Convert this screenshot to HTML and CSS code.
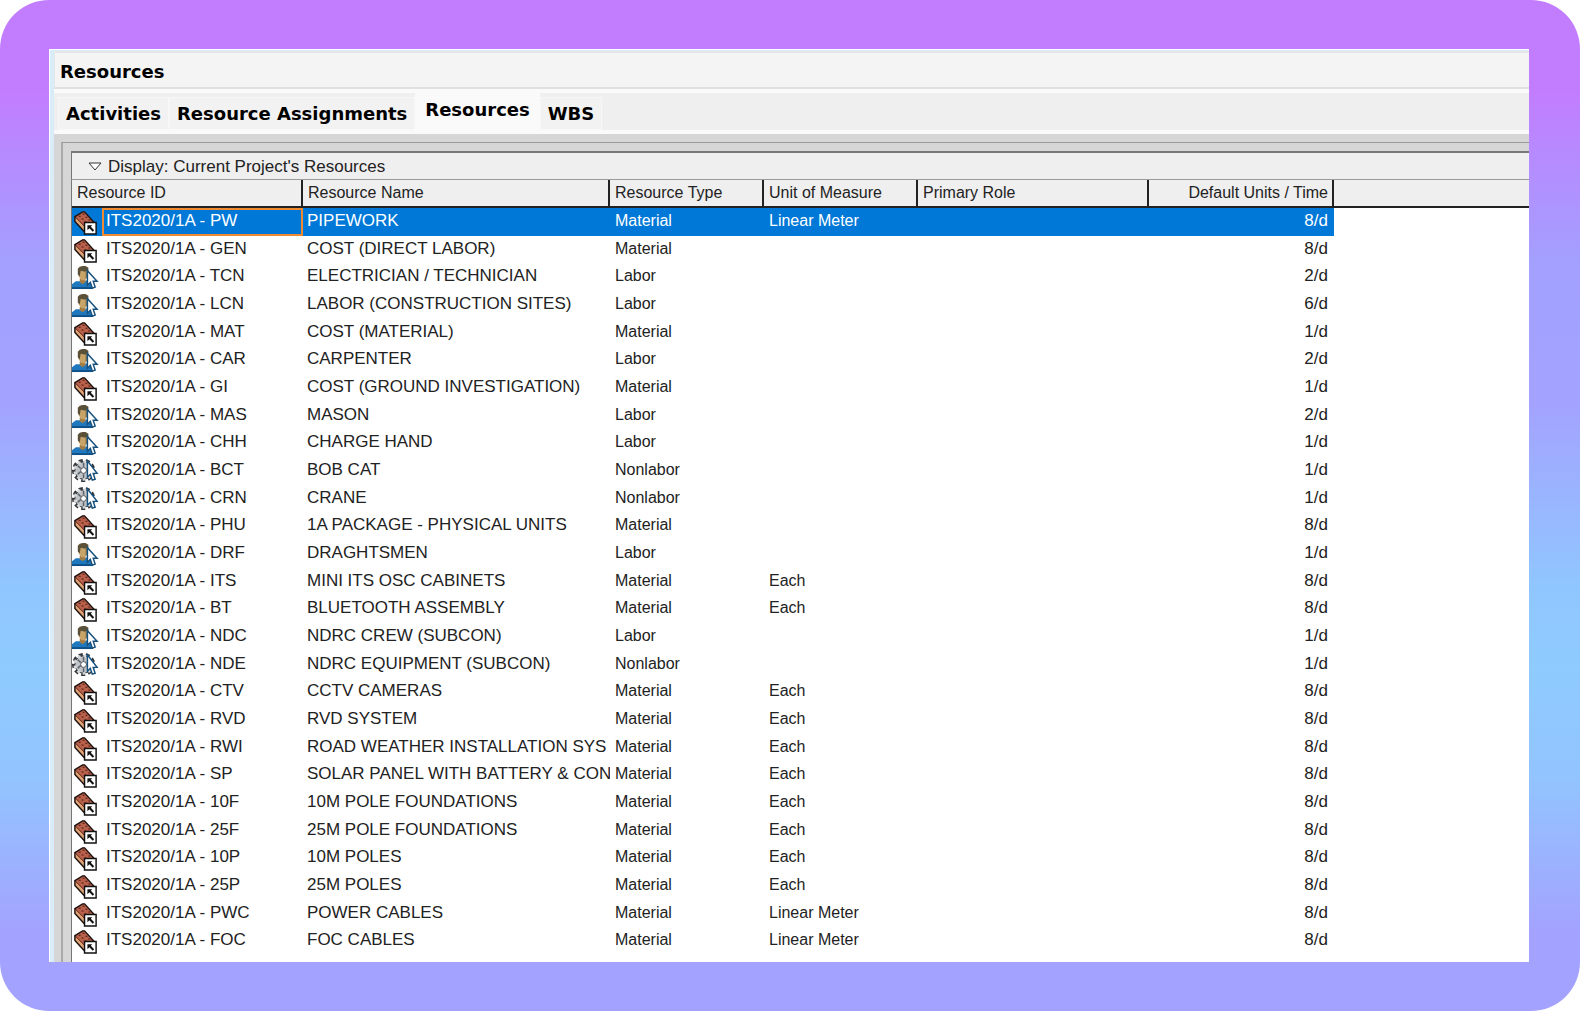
FILE: index.html
```html
<!DOCTYPE html>
<html lang="en">
<head>
    <meta charset="UTF-8">
    <meta name="viewport" content="width=device-width, initial-scale=1.0">
    <title>Resources</title>
    <link rel="stylesheet" href="styles.css">
</head>
<body>
    <svg class="sprites" aria-hidden="true">
        <symbol id="material" viewBox="0 0 28 28">
            <path d="M3 9V14L14 26H19L24 22V16L13 4H11Z" fill="#dfa274"/>
            <path d="M3 9L11 4H13L24 16L16 20H14Z" fill="#b9604a"/>
            <path d="M3 9L14 20V26" fill="none" stroke="#5a241a" stroke-width="1"/>
            <path d="M3 9L11 4H13L24 16V22L19 26H14L3 14Z" fill="none" stroke="#1c1210" stroke-width="1.5"/>
            <path d="M7 8h2v1H7z M11 6h2v1h-2z M10 11h2v1h-2z M14 9h2v1h-2z M13 14h2v1h-2z M17 12h2v1h-2z" fill="#461a16"/>
            <path class="badge" d="M13 15H25V27H13Z" stroke="#111" stroke-width="1.5"/>
            <path d="M16 18H21L19.5 19.5L23 23L21.5 24.5L18 21L16 23Z" fill="#111"/>
        </symbol>
        <symbol id="labor" viewBox="0 0 28 28">
            <path d="M0 27V22L4 19H8L11 21L15 18L20 21V27Z" fill="#1f78bd"/>
            <path d="M0 25H22V27H0Z" fill="#0f4f87"/>
            <path d="M8 16H14V20L11 22L8 20Z" fill="#a37d46"/>
            <path d="M7 7H16V14L13 18H10L7 14Z" fill="#c9a468"/>
            <path d="M6 12V6L8 4L11 3H14L17 5V9H14L9 8L8 14Z" fill="#5b5038"/>
            <path d="M14 8H16V16H14Z" fill="#8b7a50"/>
            <path d="M16 8V23L19 20L21 26L24 25L22 19H26Z" fill="#fff" stroke="#16507d" stroke-width="1.5"/>
        </symbol>
        <symbol id="nonlabor" viewBox="0 0 28 28">
            <circle cx="12" cy="14" r="10" fill="none" stroke="#33373b" stroke-width="4" stroke-dasharray="4 3"/>
            <circle cx="12" cy="14" r="9" fill="#bfc3c8" stroke="#33373b" stroke-width="1"/>
            <circle cx="12" cy="14" r="9" fill="none" stroke="#d5d8db" stroke-width="3" stroke-dasharray="3 3"/>
            <path d="M6 9l3 3 M6 18l3-3 M12 6v4 M12 18v4" stroke="#5a5f66" stroke-width="1.5"/>
            <circle cx="12" cy="14" r="3" fill="#fff" stroke="#44484e" stroke-width="1"/>
            <path d="M16 4V21L19 18L21 24L24 23L22 17H26Z" fill="#fff" stroke="#16507d" stroke-width="1.5"/>
        </symbol>
    </svg>

    <main class="window">
        <header class="titlebar">
            <h1>Resources</h1>
        </header>
        <nav class="tabs">
            <button class="tab">Activities</button>
            <button class="tab">Resource Assignments</button>
            <button class="tab active">Resources</button>
            <button class="tab">WBS</button>
        </nav>
        <section class="frame">
            <div class="panel">
                <button class="display">
                    <svg class="arrow" viewBox="0 0 14 9"><path d="M1 1H13L7 8Z" fill="#fff" stroke="#333"/></svg>
                    Display: Current Project's Resources
                </button>
                <table class="grid">
                    <thead>
                        <tr><th>Resource ID</th><th>Resource Name</th><th>Resource Type</th><th>Unit of Measure</th><th>Primary Role</th><th class="units">Default Units / Time</th></tr>
                    </thead>
                    <tbody>
                        <tr class="selected"><td class="id"><svg class="icon"><use href="#material"/></svg><span>ITS2020/1A - PW</span></td><td class="name">PIPEWORK</td><td>Material</td><td>Linear Meter</td><td></td><td class="units">8/d</td></tr>
                        <tr><td class="id"><svg class="icon"><use href="#material"/></svg><span>ITS2020/1A - GEN</span></td><td class="name">COST (DIRECT LABOR)</td><td>Material</td><td></td><td></td><td class="units">8/d</td></tr>
                        <tr><td class="id"><svg class="icon"><use href="#labor"/></svg><span>ITS2020/1A - TCN</span></td><td class="name">ELECTRICIAN / TECHNICIAN</td><td>Labor</td><td></td><td></td><td class="units">2/d</td></tr>
                        <tr><td class="id"><svg class="icon"><use href="#labor"/></svg><span>ITS2020/1A - LCN</span></td><td class="name">LABOR (CONSTRUCTION SITES)</td><td>Labor</td><td></td><td></td><td class="units">6/d</td></tr>
                        <tr><td class="id"><svg class="icon"><use href="#material"/></svg><span>ITS2020/1A - MAT</span></td><td class="name">COST (MATERIAL)</td><td>Material</td><td></td><td></td><td class="units">1/d</td></tr>
                        <tr><td class="id"><svg class="icon"><use href="#labor"/></svg><span>ITS2020/1A - CAR</span></td><td class="name">CARPENTER</td><td>Labor</td><td></td><td></td><td class="units">2/d</td></tr>
                        <tr><td class="id"><svg class="icon"><use href="#material"/></svg><span>ITS2020/1A - GI</span></td><td class="name">COST (GROUND INVESTIGATION)</td><td>Material</td><td></td><td></td><td class="units">1/d</td></tr>
                        <tr><td class="id"><svg class="icon"><use href="#labor"/></svg><span>ITS2020/1A - MAS</span></td><td class="name">MASON</td><td>Labor</td><td></td><td></td><td class="units">2/d</td></tr>
                        <tr><td class="id"><svg class="icon"><use href="#labor"/></svg><span>ITS2020/1A - CHH</span></td><td class="name">CHARGE HAND</td><td>Labor</td><td></td><td></td><td class="units">1/d</td></tr>
                        <tr><td class="id"><svg class="icon"><use href="#nonlabor"/></svg><span>ITS2020/1A - BCT</span></td><td class="name">BOB CAT</td><td>Nonlabor</td><td></td><td></td><td class="units">1/d</td></tr>
                        <tr><td class="id"><svg class="icon"><use href="#nonlabor"/></svg><span>ITS2020/1A - CRN</span></td><td class="name">CRANE</td><td>Nonlabor</td><td></td><td></td><td class="units">1/d</td></tr>
                        <tr><td class="id"><svg class="icon"><use href="#material"/></svg><span>ITS2020/1A - PHU</span></td><td class="name">1A PACKAGE - PHYSICAL UNITS</td><td>Material</td><td></td><td></td><td class="units">8/d</td></tr>
                        <tr><td class="id"><svg class="icon"><use href="#labor"/></svg><span>ITS2020/1A - DRF</span></td><td class="name">DRAGHTSMEN</td><td>Labor</td><td></td><td></td><td class="units">1/d</td></tr>
                        <tr><td class="id"><svg class="icon"><use href="#material"/></svg><span>ITS2020/1A - ITS</span></td><td class="name">MINI ITS OSC CABINETS</td><td>Material</td><td>Each</td><td></td><td class="units">8/d</td></tr>
                        <tr><td class="id"><svg class="icon"><use href="#material"/></svg><span>ITS2020/1A - BT</span></td><td class="name">BLUETOOTH ASSEMBLY</td><td>Material</td><td>Each</td><td></td><td class="units">8/d</td></tr>
                        <tr><td class="id"><svg class="icon"><use href="#labor"/></svg><span>ITS2020/1A - NDC</span></td><td class="name">NDRC CREW (SUBCON)</td><td>Labor</td><td></td><td></td><td class="units">1/d</td></tr>
                        <tr><td class="id"><svg class="icon"><use href="#nonlabor"/></svg><span>ITS2020/1A - NDE</span></td><td class="name">NDRC EQUIPMENT (SUBCON)</td><td>Nonlabor</td><td></td><td></td><td class="units">1/d</td></tr>
                        <tr><td class="id"><svg class="icon"><use href="#material"/></svg><span>ITS2020/1A - CTV</span></td><td class="name">CCTV CAMERAS</td><td>Material</td><td>Each</td><td></td><td class="units">8/d</td></tr>
                        <tr><td class="id"><svg class="icon"><use href="#material"/></svg><span>ITS2020/1A - RVD</span></td><td class="name">RVD SYSTEM</td><td>Material</td><td>Each</td><td></td><td class="units">8/d</td></tr>
                        <tr><td class="id"><svg class="icon"><use href="#material"/></svg><span>ITS2020/1A - RWI</span></td><td class="name">ROAD WEATHER INSTALLATION SYS</td><td>Material</td><td>Each</td><td></td><td class="units">8/d</td></tr>
                        <tr><td class="id"><svg class="icon"><use href="#material"/></svg><span>ITS2020/1A - SP</span></td><td class="name">SOLAR PANEL WITH BATTERY &amp; CON</td><td>Material</td><td>Each</td><td></td><td class="units">8/d</td></tr>
                        <tr><td class="id"><svg class="icon"><use href="#material"/></svg><span>ITS2020/1A - 10F</span></td><td class="name">10M POLE FOUNDATIONS</td><td>Material</td><td>Each</td><td></td><td class="units">8/d</td></tr>
                        <tr><td class="id"><svg class="icon"><use href="#material"/></svg><span>ITS2020/1A - 25F</span></td><td class="name">25M POLE FOUNDATIONS</td><td>Material</td><td>Each</td><td></td><td class="units">8/d</td></tr>
                        <tr><td class="id"><svg class="icon"><use href="#material"/></svg><span>ITS2020/1A - 10P</span></td><td class="name">10M POLES</td><td>Material</td><td>Each</td><td></td><td class="units">8/d</td></tr>
                        <tr><td class="id"><svg class="icon"><use href="#material"/></svg><span>ITS2020/1A - 25P</span></td><td class="name">25M POLES</td><td>Material</td><td>Each</td><td></td><td class="units">8/d</td></tr>
                        <tr><td class="id"><svg class="icon"><use href="#material"/></svg><span>ITS2020/1A - PWC</span></td><td class="name">POWER CABLES</td><td>Material</td><td>Linear Meter</td><td></td><td class="units">8/d</td></tr>
                        <tr><td class="id"><svg class="icon"><use href="#material"/></svg><span>ITS2020/1A - FOC</span></td><td class="name">FOC CABLES</td><td>Material</td><td>Linear Meter</td><td></td><td class="units">8/d</td></tr>
                    </tbody>
                </table>
            </div>
        </section>
    </main>
</body>
</html>
```
FILE: styles.css
```css
* {
    box-sizing: border-box;
}
html {
    background: #fff;
}
body {
    display: flex;
    min-height: 100vh;
    margin: 0;
    padding: 49px 51px 49px 49px;
    border-radius: 49px;
    background: linear-gradient(180deg, #c27dff 9%, #a3a0ff 26%, #a3a3ff 40%, #90c6ff 58%, #8fcbff 66%, #92c4ff 77%, #a3a3ff 92%);
    font-family: "Liberation Sans", Arial, sans-serif;
    font-size: 16px;
    color: #222;
}
button {
    border: 0;
    color: inherit;
    font-family: inherit;
    cursor: pointer;
}
.sprites {
    position: absolute;
    width: 0;
    height: 0;
}
.window {
    display: flex;
    flex-direction: column;
    flex: 1;
    min-width: 0;
    padding: 1px 0 0 1px;
    border-top: 1px solid #fff;
    border-left: 1px solid #fff;
    background: #d9ecf7;
}
.titlebar {
    height: 38px;
    padding: 0 5px;
    margin-left: 3px;
    border-top: 2px solid #e4e6e7;
    border-bottom: 2px solid #e0e0e0;
    border-left: 1px solid #e4e6e7;
    background: #f4f4f4;
}
h1, .tab {
    margin: 0;
    font-family: "DejaVu Sans", Verdana, sans-serif;
    font-size: 18px;
    font-weight: bold;
    line-height: 37px;
    color: #000;
}
.tabs {
    display: flex;
    align-items: flex-end;
    height: 45px;
    margin-left: 3px;
    padding: 0 4px;
    border-top: 4px solid #fafafa;
    border-bottom: 4px solid #fafafa;
    background: #efefef;
}
.tab {
    height: 33px;
    padding: 0 7px;
    border: 1px solid #f7f7f7;
    background: #f2f2f2;
    line-height: 31px;
}
.tab.active {
    height: 37px;
    padding: 0 9px 4px;
    border-color: #fafafa;
    background: #fafafa;
}
.frame {
    display: flex;
    flex: 1;
    margin-left: 3px;
    padding: 8px 0 0 7px;
    background: #d6d6d6;
}
.panel {
    display: flex;
    flex-direction: column;
    flex: 1;
    min-width: 0;
    padding: 8px 0 0 8px;
    border-top: 1px solid #999;
    border-left: 2px solid #aaa;
}
.display {
    display: flex;
    align-items: center;
    gap: 6px;
    height: 29px;
    padding: 1px 16px 0;
    border-top: 2px solid #777;
    border-left: 1px solid #777;
    border-bottom: 1px solid #999;
    background: #efefef;
    font-size: 17px;
}
.arrow {
    width: 14px;
    height: 9px;
}
.grid {
    display: flex;
    flex-direction: column;
    flex: 1;
    padding-bottom: 7px;
    border-left: 1px solid #777;
    background: #fff;
}
.grid tr {
    display: grid;
    grid-template-columns: 231px 307px 154px 154px 231px 185px;
}
.grid thead {
    border-bottom: 2px solid #222;
    background: #efefef;
}
.grid tbody {
    display: grid;
    grid-auto-rows: 1fr;
    flex: 1;
    justify-content: start;
}
th {
    padding: 0 5px;
    border-right: 2px solid #222;
    font-weight: normal;
    line-height: 26px;
    text-align: left;
    white-space: nowrap;
}
td {
    overflow: hidden;
    padding: 0 5px;
    line-height: 25px;
    white-space: nowrap;
}
.grid .units {
    padding-right: 4px;
    text-align: right;
}
.grid td.units {
    padding-right: 6px;
    font-size: 17px;
}
.grid td.id {
    display: flex;
    gap: 3px;
    padding: 0;
}
.id span {
    flex: 1;
    padding-left: 4px;
    font-size: 17px;
}
.grid td.name {
    padding: 0 0 0 4px;
    font-size: 17px;
}
.icon {
    width: 27px;
    height: 27px;
}
.badge {
    fill: #fff;
}
.selected {
    background: #0078d7;
    color: #fff;
}
.selected span {
    border: 2px solid #f08a30;
    padding-left: 2px;
    line-height: 21px;
}
.selected .badge {
    fill: #0078d7;
}
```
